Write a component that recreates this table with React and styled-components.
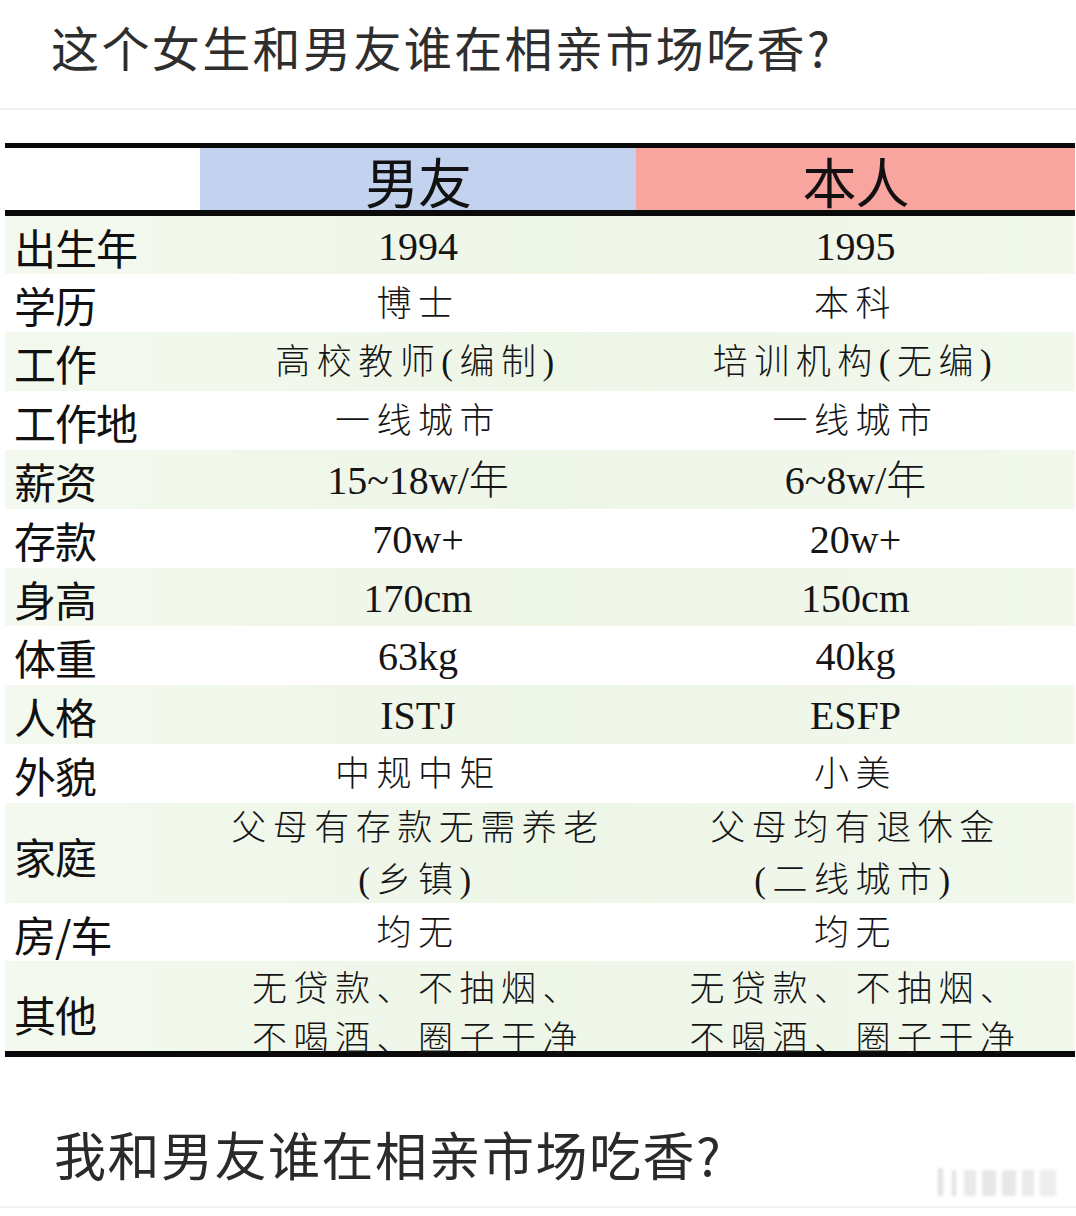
import React from "react";
import styled, { createGlobalStyle } from "styled-components";

const Global = createGlobalStyle`
  html, body { margin: 0; padding: 0; background: #ffffff; }
  body { font-family: "Noto Sans CJK SC", "Noto Sans", sans-serif; }
`;

const Page = styled.div`
  width: 1076px;
  height: 1216px;
  overflow: hidden;
  background: #fff;
  position: relative;
`;

const Title = styled.h1`
  margin: 0;
  height: 110px;
  box-sizing: border-box;
  padding: 14px 0 0 51px;
  font-family: "Noto Sans CJK SC", sans-serif;
  font-weight: 400;
  font-size: 48px;
  line-height: 64px;
  color: #2e2e2e;
  letter-spacing: 2.4px;
  border-bottom: 2px solid #f0f0f0;
`;

const Gap = styled.div`
  height: 33px;
`;

const Table = styled.div`
  margin-left: 5px;
  width: 1070px;
  border-top: 5px solid #0a0a0a;
  border-bottom: 6px solid #0a0a0a;
`;

const Row = styled.div`
  display: grid;
  grid-template-columns: 195px 436px 1fr;
  height: ${(p) => p.$h}px;
  background: ${(p) => (p.$green ? "linear-gradient(90deg, #f3f9ee 0%, #eef6e8 50%, #f1f8ec 100%)" : "#ffffff")};
`;

const HeaderRow = styled.div`
  display: grid;
  grid-template-columns: 195px 436px 1fr;
  height: 62px;
  border-bottom: 6px solid #0a0a0a;
`;

const HeadCell = styled.div`
  background: ${(p) => p.$bg};
  display: flex;
  align-items: center;
  justify-content: center;
  font-family: "Noto Sans CJK SC", sans-serif;
  font-size: 54px;
  line-height: 62px;
  height: 62px;
  color: #111;
  padding-top: 4px;
  box-sizing: border-box;
  letter-spacing: -1px;
`;

const Label = styled.div`
  display: flex;
  align-items: center;
  padding-left: 9px;
  font-family: "Noto Sans CJK SC", sans-serif;
  font-size: 42px;
  color: #111;
  letter-spacing: -1px;
  white-space: nowrap;
`;

const Value = styled.div`
  display: flex;
  flex-direction: column;
  align-items: center;
  justify-content: center;
  font-family: "Liberation Serif", "Noto Sans CJK SC", serif;
  font-weight: 300;
  font-size: ${(p) => (p.$latin ? 40 : 35)}px;
  letter-spacing: ${(p) => (p.$latin ? 0 : 6.5)}px;
  color: #151515;
  line-height: ${(p) => (p.$lh ? p.$lh : 52)}px;
  white-space: nowrap;
  padding-top: ${(p) => (p.$pt ? p.$pt : 0)}px;
  box-sizing: border-box;
`;

const BottomTitle = styled.div`
  padding: 62px 0 0 54px;
  font-family: "Noto Sans CJK SC", sans-serif;
  font-size: 52px;
  line-height: 70px;
  letter-spacing: 1.5px;
  color: #2a2a2a;
`;

const Watermark = styled.svg`
  position: absolute;
  right: 6px;
  bottom: 18px;
  opacity: 0.55;
`;

const BottomLine = styled.div`
  position: absolute;
  left: 0;
  right: 0;
  bottom: 8px;
  height: 2px;
  background: #f2f2f2;
`;

const rows = [
  { label: "出生年", a: ["1994"], b: ["1995"], latin: true },
  { label: "学历", a: ["博士"], b: ["本科"] },
  { label: "工作", a: ["高校教师(编制)"], b: ["培训机构(无编)"] },
  { label: "工作地", a: ["一线城市"], b: ["一线城市"] },
  { label: "薪资", a: ["15~18w/年"], b: ["6~8w/年"], latin: true },
  { label: "存款", a: ["70w+"], b: ["20w+"], latin: true },
  { label: "身高", a: ["170cm"], b: ["150cm"], latin: true },
  { label: "体重", a: ["63kg"], b: ["40kg"], latin: true },
  { label: "人格", a: ["ISTJ"], b: ["ESFP"], latin: true },
  { label: "外貌", a: ["中规中矩"], b: ["小美"] },
  { label: "家庭", a: ["父母有存款无需养老", "(乡镇)"], b: ["父母均有退休金", "(二线城市)"], h: 100 },
  { label: "房/车", a: ["均无"], b: ["均无"] },
  { label: "其他", a: ["无贷款、不抽烟、", "不喝酒、圈子干净"], b: ["无贷款、不抽烟、", "不喝酒、圈子干净"], lh: 50, pt: 4 },
];

const heights = [58, 58, 59, 59, 59, 59, 58, 59, 59, 59, 100, 58, 90];

export default function App() {
  return (
    <Page>
      <Global />
      <Title>这个女生和男友谁在相亲市场吃香?</Title>
      <Gap />
      <Table>
        <HeaderRow>
          <HeadCell $bg="#ffffff" />
          <HeadCell $bg="#c3d2ef">男友</HeadCell>
          <HeadCell $bg="#f8a5a0">本人</HeadCell>
        </HeaderRow>
        {rows.map((r, i) => (
          <Row key={r.label} $h={heights[i]} $green={i % 2 === 0}>
            <Label>{r.label}</Label>
            <Value $latin={r.latin} $lh={r.lh} $pt={r.pt}>
              {r.a.map((t) => (
                <span key={t}>{t}</span>
              ))}
            </Value>
            <Value $latin={r.latin} $lh={r.lh} $pt={r.pt}>
              {r.b.map((t) => (
                <span key={t}>{t}</span>
              ))}
            </Value>
          </Row>
        ))}
      </Table>
      <BottomTitle>我和男友谁在相亲市场吃香?</BottomTitle>
      <BottomLine />
      <Watermark width="140" height="34" viewBox="0 0 140 34">
        <defs>
          <filter id="blur" x="-20%" y="-20%" width="140%" height="140%">
            <feGaussianBlur stdDeviation="1.6" />
          </filter>
        </defs>
        <g filter="url(#blur)" fill="#c8c8c8">
          <rect x="8" y="4" width="5" height="28" />
          <rect x="22" y="6" width="4" height="26" />
          <rect x="34" y="6" width="12" height="26" opacity="0.7" />
          <rect x="52" y="6" width="14" height="26" opacity="0.8" />
          <rect x="72" y="6" width="14" height="26" opacity="0.8" />
          <rect x="92" y="6" width="12" height="26" opacity="0.7" />
          <rect x="110" y="6" width="16" height="26" opacity="0.6" />
        </g>
      </Watermark>
    </Page>
  );
}
